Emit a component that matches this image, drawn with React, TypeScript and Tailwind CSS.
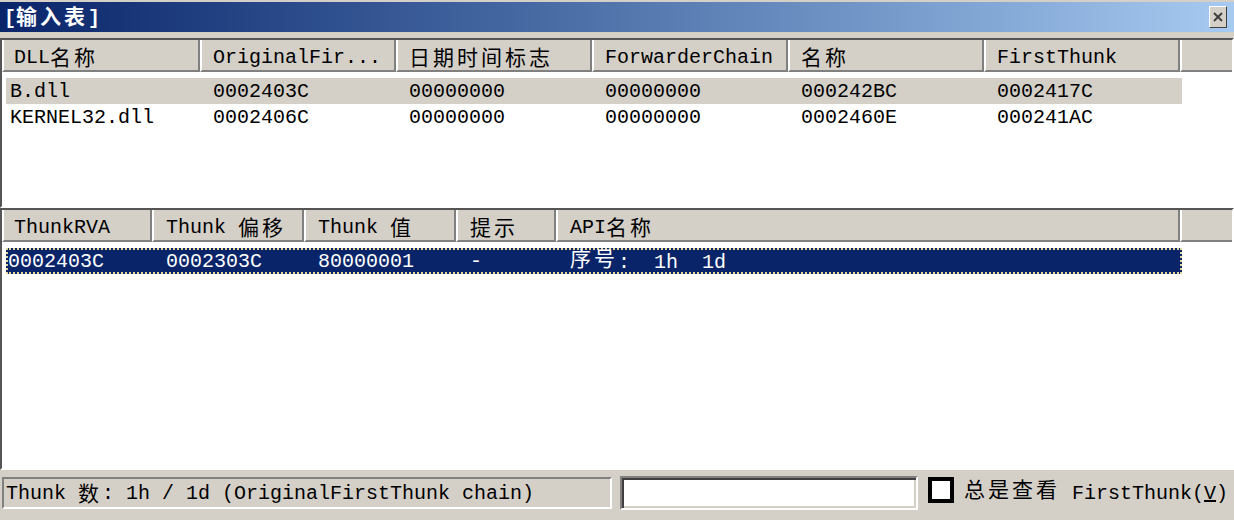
import React from "react";

const CJK = /([\u2e80-\u9fff\uff00-\uffef\u3000-\u303f]+)/;

function T({ s, flat }: { s: string; flat?: boolean }) {
  return (
    <>
      {s.split(CJK).map((p, i) =>
        p && CJK.test(p) ? (
          <span
            key={i}
            className={
              flat
                ? "font-['Noto_Sans_CJK_SC','Noto_Sans_CJK_TC',sans-serif] text-[21px] tracking-[3px]"
                : "relative -top-[2px] font-['Noto_Sans_CJK_SC','Noto_Sans_CJK_TC',sans-serif] text-[21px] tracking-[3px] leading-[20px]"
            }
          >
            {p}
          </span>
        ) : (
          <span key={i}>{p}</span>
        )
      )}
    </>
  );
}

type Col = { w: string; label: string; pl: string };

function HeaderCell({ w, label, pl }: Col) {
  return (
    <div
      className={`flex-none ${w} h-full flex items-center pt-[6px] ${pl} border-l-2 border-l-white border-r-2 border-r-[#808080] border-b-2 border-b-[#808080] whitespace-pre`}
    >
      <T s={label} />
    </div>
  );
}

const topCols: Col[] = [
  { w: "w-[198px]", label: "DLL名称", pl: "pl-[10px]" },
  { w: "w-[196px]", label: "OriginalFir...", pl: "pl-[11px]" },
  { w: "w-[196px]", label: "日期时间标志", pl: "pl-[11px]" },
  { w: "w-[196px]", label: "ForwarderChain", pl: "pl-[11px]" },
  { w: "w-[196px]", label: "名称", pl: "pl-[11px]" },
  { w: "w-[196px]", label: "FirstThunk", pl: "pl-[11px]" },
];

const botCols: Col[] = [
  { w: "w-[150px]", label: "ThunkRVA", pl: "pl-[10px]" },
  { w: "w-[152px]", label: "Thunk 偏移", pl: "pl-[12px]" },
  { w: "w-[152px]", label: "Thunk 值", pl: "pl-[12px]" },
  { w: "w-[100px]", label: "提示", pl: "pl-[12px]" },
  { w: "w-[624px]", label: "API名称", pl: "pl-[12px]" },
];

const topRows = [
  ["B.dll", "0002403C", "00000000", "00000000", "000242BC", "0002417C"],
  ["KERNEL32.dll", "0002406C", "00000000", "00000000", "0002460E", "000241AC"],
];

function Header({ cols }: { cols: Col[] }) {
  return (
    <div className="flex h-[32px] bg-[#d4d0c8] flex-none">
      {cols.map((c, i) => (
        <HeaderCell key={i} {...c} />
      ))}
      <div className="flex-1 h-full border-l-2 border-l-white border-b-2 border-b-[#808080]" />
    </div>
  );
}

const listBorder =
  "flex flex-col bg-white border-2 border-t-[#555555] border-l-[#555555] border-r-white border-b-white overflow-hidden";

export default function App() {
  return (
    <div className="w-[1234px] h-[520px] bg-[#d4d0c8] flex flex-col overflow-hidden font-['Liberation_Mono','Noto_Sans_CJK_SC',monospace] text-[20px] leading-[26px] text-black">
      <div className="h-[2px] flex-none bg-[#d4d0c8]" />
      {/* Title bar */}
      <div className="h-[30px] flex-none flex items-center justify-between bg-gradient-to-r from-[#0a246a] to-[#a6caf0] pl-[4px] pr-[7px]">
        <span className="text-white font-bold whitespace-pre leading-[30px]">
          <T s="[输入表]" flat />
        </span>
        <div className="w-[18px] h-[22px] bg-[#d4d0c8] border border-t-white border-l-white border-r-[#404040] border-b-[#404040] flex items-center justify-center">
          <svg width="10" height="10" viewBox="0 0 10 10">
            <path d="M1 1 L9 9 M9 1 L1 9" stroke="#404040" strokeWidth="2" />
          </svg>
        </div>
      </div>
      <div className="h-[6px] flex-none" />

      {/* Top list */}
      <div className={`${listBorder} h-[170px] flex-none`}>
        <Header cols={topCols} />
        <div className="pt-[6px]">
          {topRows.map((r, ri) => (
            <div
              key={ri}
              className={`ml-[4px] w-[1176px] h-[26px] flex whitespace-pre pt-[1px] ${ri === 0 ? "bg-[#d4d0c8]" : ""}`}
            >
              {r.map((c, ci) => (
                <div
                  key={ci}
                  className={ci === 0 ? "w-[194px] pl-[4px] flex-none" : "w-[196px] pl-[13px] flex-none"}
                >
                  {c}
                </div>
              ))}
            </div>
          ))}
        </div>
      </div>

      {/* Bottom list */}
      <div className={`${listBorder} h-[262px] flex-none`}>
        <Header cols={botCols} />
        <div className="pt-[6px]">
          <div className="ml-[4px] w-[1176px] h-[26px] flex whitespace-pre pt-[1px] bg-[#0a246a] text-white outline-2 outline-dotted outline-[#e6d79a] outline-offset-[-2px]">
            <div className="w-[146px] pl-[2px] flex-none">0002403C</div>
            <div className="w-[152px] pl-[14px] flex-none">0002303C</div>
            <div className="w-[152px] pl-[14px] flex-none">80000001</div>
            <div className="w-[100px] pl-[14px] flex-none">-</div>
            <div className="flex-1 pl-[14px]">
              <T s="序号:  1h  1d" />
            </div>
          </div>
        </div>
      </div>

      {/* Status bar */}
      <div className="mt-[6px] h-[34px] flex-none flex items-center">
        <div className="ml-[2px] w-[610px] h-[32px] flex-none border-2 border-t-[#808080] border-l-[#808080] border-b-white border-r-white pl-[2px] pt-[2px] flex items-center whitespace-pre">
          <T s="Thunk 数: 1h / 1d (OriginalFirstThunk chain)" />
        </div>
        <div className="ml-[8px] w-[298px] h-[34px] flex-none bg-white border-2 border-t-[#808080] border-l-[#808080] border-b-white border-r-white shadow-[inset_2px_2px_0_#404040,inset_-2px_-2px_0_#d4d0c8]" />
        <div className="ml-[10px] w-[26px] h-[26px] flex-none self-start mt-[1px] border-4 border-black bg-white" />
        <div className="ml-[10px] whitespace-pre">
          <T s="总是查看 FirstThunk(" />
          <span className="underline">V</span>)
        </div>
      </div>
    </div>
  );
}
